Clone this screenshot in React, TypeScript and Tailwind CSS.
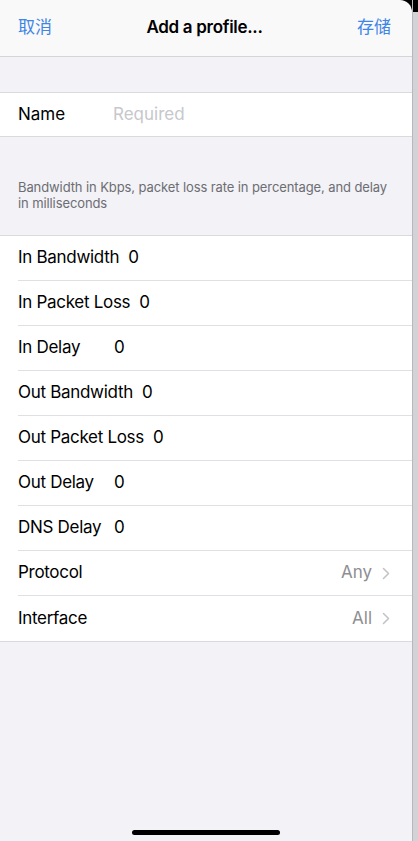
import React from 'react';

const FONT = { fontFamily: 'Inter, "Noto Sans CJK SC", "Liberation Sans", sans-serif' };

const FIELDS: { label: string; value: string }[] = [
  { label: 'In Bandwidth', value: '0' },
  { label: 'In Packet Loss', value: '0' },
  { label: 'In Delay', value: '0' },
  { label: 'Out Bandwidth', value: '0' },
  { label: 'Out Packet Loss', value: '0' },
  { label: 'Out Delay', value: '0' },
  { label: 'DNS Delay', value: '0' },
];

const PICKERS = [
  { label: 'Protocol', value: 'Any' },
  { label: 'Interface', value: 'All' },
];

const Chevron = () => (
  <svg width="8" height="13" viewBox="0 0 8 13" className="ml-[10px]">
    <path d="M1.5 1.5 L6.5 6.5 L1.5 11.5" fill="none" stroke="#c4c4c8" strokeWidth="1.6" strokeLinecap="round" strokeLinejoin="round" />
  </svg>
);

export default function App() {
  return (
    <div className="flex w-[418px] h-[841px] bg-[#d3d3d7] overflow-hidden" style={FONT}>
      {/* sheet */}
      <div className="w-[412px] h-full flex flex-col bg-[#f2f2f7]">
        <div className="bg-black">
          <div className="h-[57px] bg-[#f9f9f9] rounded-tr-[12px] border-b border-[#d5d5d9] flex items-center justify-between pl-[18px] pr-[21px]">
            <span className="text-[17px] text-[#3d85e6] w-[60px]">取消</span>
            <span className="text-[17px] font-semibold text-black tracking-[-0.3px]">Add a profile...</span>
            <span className="text-[17px] text-[#3d85e6] w-[60px] text-right">存储</span>
          </div>
        </div>

        <div className="h-[35px]" />

        <div className="h-[45px] bg-white border-y border-[#dadade] flex items-center pl-[18px]">
          <span className="text-[17px] text-black w-[95px]">Name</span>
          <span className="text-[17px] text-[#c7c7cc]">Required</span>
        </div>

        <div className="h-[98px] flex flex-col justify-end pb-[24px] px-[18px]">
          <p className="text-[13px] leading-[16px] text-[#6d6d72] tracking-[-0.1px]">
            Bandwidth in Kbps, packet loss rate in percentage, and delay in milliseconds
          </p>
        </div>

        <div className="bg-white border-y border-[#dadade]">
          {FIELDS.map((f) => (
            <div key={f.label} className="h-[45px] pl-[18px]">
              <div className="h-full flex items-center border-b border-[#e0e0e4]">
                <span className="text-[17px] text-black min-w-[87px] mr-[9px] tracking-[-0.3px]">{f.label}</span>
                <span className="text-[17px] text-black">{f.value}</span>
              </div>
            </div>
          ))}
          {PICKERS.map((p, i) => (
            <div key={p.label} className="h-[45px] pl-[18px]">
              <div className={`h-full flex items-center justify-between pr-[22px] ${i === 0 ? 'border-b border-[#e0e0e4]' : ''}`}>
                <span className="text-[17px] text-black tracking-[-0.3px]">{p.label}</span>
                <span className="flex items-center text-[17px] text-[#8e8e93]">
                  {p.value}
                  <Chevron />
                </span>
              </div>
            </div>
          ))}
        </div>

        <div className="flex-1" />
        <div className="h-[11px] flex justify-center">
          <div className="w-[148px] h-[5px] rounded-full bg-black" />
        </div>
      </div>
      {/* backdrop edge */}
      <div className="flex-1 flex flex-col border-l border-[#b8b8bc]">
        <div className="h-[12px] bg-black" />
        <div className="flex-1 bg-[#d3d3d7]" />
      </div>
    </div>
  );
}
